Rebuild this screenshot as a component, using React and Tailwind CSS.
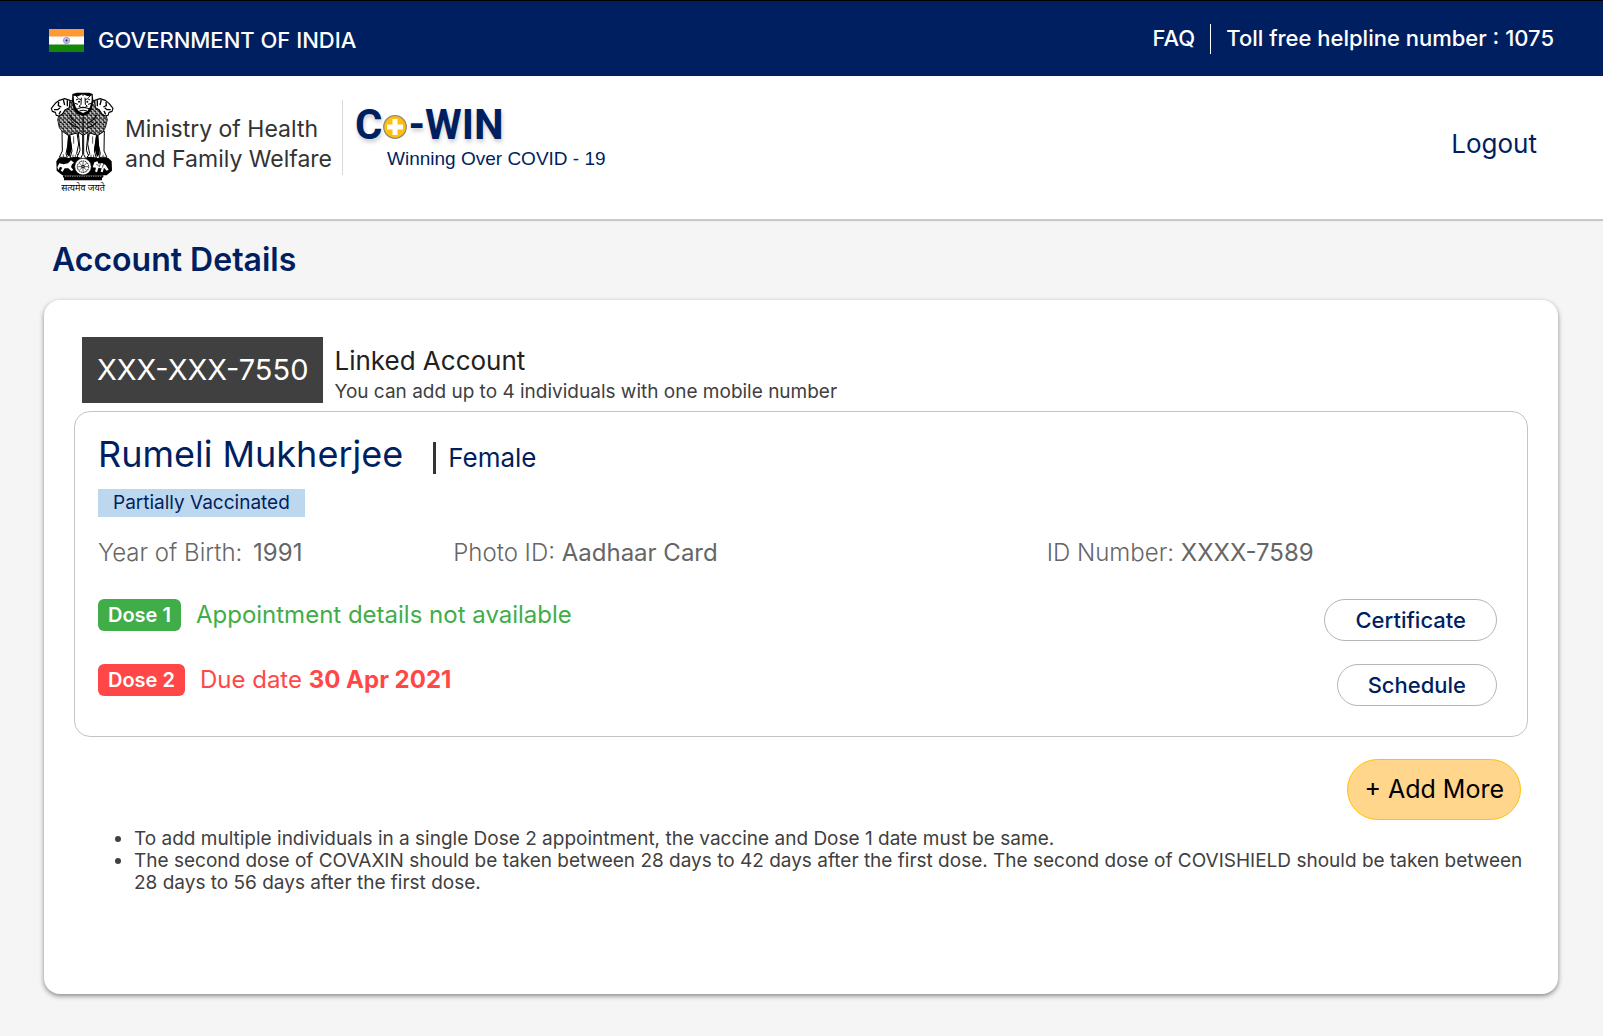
import React from 'react';

const NOTES = [
  'To add multiple individuals in a single Dose 2 appointment, the vaccine and Dose 1 date must be same.',
  'The second dose of COVAXIN should be taken between 28 days to 42 days after the first dose. The second dose of COVISHIELD should be taken between 28 days to 56 days after the first dose.'
];

function IndiaFlag() {
  return (
    <svg className="w-[35px] h-[23px] shrink-0" viewBox="0 0 35 23" role="img" aria-label="Flag of India">
      <rect width="35" height="23" fill="#fff" />
      <rect width="35" height="7.5" fill="#ff9933" />
      <rect y="15.5" width="35" height="7.5" fill="#138808" />
      <circle cx="17.5" cy="11.5" r="3.1" fill="#d5d5ec" stroke="#8080c4" strokeWidth="0.8" />
      <path d="M17.5 8.5v6M14.5 11.5h6M15.4 9.4l4.2 4.2M19.6 9.4l-4.2 4.2" stroke="#8080c4" strokeWidth="0.4" />
      <circle cx="17.5" cy="11.5" r="1" fill="#20208c" />
    </svg>
  );
}

function StateEmblem() {
  return (
    <svg className="w-16 h-[101px] shrink-0" viewBox="32 37 192 303" role="img" aria-label="State Emblem of India">
      <defs>
        <pattern id="mane" width="12" height="13" patternUnits="userSpaceOnUse">
          <rect width="12" height="13" fill="#000" />
          <path d="M2 0q5 4 2 9M8 6q4 4 1 8M8 -7q4 4 1 8" stroke="#fff" strokeWidth="3.6" fill="none" />
        </pattern>
      </defs>

      {/* bodies and manes */}
      <path
        d="M98 62 76 66 58 80 60 104 55 120 60 144 74 162 88 170 100 163 114 172 131 164 146 172 160 163 172 170 187 162 198 144 204 120 199 104 202 80 184 66 162 62Z"
        fill="url(#mane)" stroke="#000" strokeWidth="2.5"
      />

      {/* side heads */}
      <g fill="#fff" stroke="#000" strokeWidth="3.5" strokeLinejoin="round">
        <path d="M92 62 76 57 60 62 48 71 36 86 39 95 48 98 51 107 60 109 70 102 78 90 90 84Z" />
        <path d="M166 62 182 57 198 62 209 71 221 86 218 95 209 98 206 107 197 109 187 102 179 90 168 84Z" />
      </g>
      <g fill="none" stroke="#000" strokeWidth="4">
        <path d="M58 67 57 78 66 82M72 60 76 76M84 62 84 80M44 90 55 90 62 84M64 94l-5 10" />
        <path d="M200 67 201 78 192 82M186 60 182 76M174 62 174 80M214 90 203 90 196 84M194 94l5 10" />
      </g>

      {/* front head */}
      <path d="M99 43 112 39h38l10 4 2 22-5 24-10 14-16 6-17-6-11-14-5-24Z" fill="#000" />
      <path d="M103 48 116 50 130 44 146 50 157 47 157 64 152 82 144 94 131 100 118 94 109 82 104 64Z" fill="#fff" />
      <path
        d="M110 61q9-8 15 0M137 61q8-8 15 0M126 54l-1 20-6 6 8 4h9l8-4-6-6-1-20M114 87q17-9 35 0M120 94q11-5 23 0M107 46l9 8M155 46l-8 8M131 40v9M106 71l10 3M156 71l-10 3"
        fill="none" stroke="#000" strokeWidth="3"
      />
      <circle cx="119" cy="66" r="3" />
      <circle cx="144" cy="66" r="3" />

      {/* chest curls */}
      <path
        d="M90 106q10 18 28 25M88 126q12 14 30 18M172 106q-10 18-28 25M174 126q-12 14-30 18M131 112v46"
        fill="none" stroke="#000" strokeWidth="3.5"
      />

      {/* legs */}
      <g fill="#fff" stroke="#000" strokeWidth="3" strokeLinejoin="round">
        <path d="M68 154 88 168 86 194 80 222 84 233 60 233 69 214Z" />
        <path d="M91 166 113 160 118 193 112 222 120 233 92 235 98 214Z" />
        <path d="M117 158 130 166 130 224 124 236 113 233 122 212Z" />
        <path d="M146 158 133 166 133 224 139 236 150 233 141 212Z" />
        <path d="M172 166 150 160 145 193 151 222 143 233 171 235 165 214Z" />
        <path d="M195 154 175 168 177 194 183 222 179 233 203 233 194 214Z" />
      </g>
      <path d="M86 168 93 168 98 206 90 232 82 224ZM177 168 170 168 165 206 173 232 181 224Z" />
      <path d="M103 170v22M160 170v22" stroke="#000" strokeWidth="2" />
      <path d="M72 224v9M101 225v9M108 225v9M155 225v9M163 225v9M191 225v9" stroke="#000" strokeWidth="2" />

      {/* abacus with wheel, horse and bull */}
      <path d="M58 235h34l20-3 19 5 20-5 22 3h34l10 10 1 28-16 14H69l-17-14-1-28Z" />
      <circle cx="131" cy="261" r="25" fill="#fff" stroke="#000" strokeWidth="2" />
      <circle cx="131" cy="261" r="17" fill="none" stroke="#000" strokeWidth="3" strokeDasharray="5 2" />
      <path d="M131 246v30M116 261h30M120 250l22 22M142 250l-22 22" stroke="#000" strokeWidth="1.8" />
      <circle cx="131" cy="261" r="5" fill="#000" />
      <circle cx="131" cy="261" r="2" fill="#fff" />
      <path d="M54 262 60 251 73 254 86 251 95 242 104 249 98 254 95 262 102 271 96 274 87 266 76 266 70 276 64 273 69 264 62 261 57 271Z" fill="#fff" />
      <path d="M160 263 165 248 174 245 178 252 188 250 199 256 208 270 202 273 194 264 190 278 184 276 187 266 177 265 173 278 167 276 170 264Z" fill="#fff" />
      <path d="M171 254l7 4M184 251l-5 12M193 252l-4 12M163 270l5 6" stroke="#000" strokeWidth="2" />

      {/* plinth */}
      <path d="M71 287h121v5l-4 3v7H74v-7l-3-3Z" />
      <path d="M77 290h109" stroke="#fff" strokeWidth="1.5" strokeDasharray="4 3" />

      <text x="131" y="333" textAnchor="middle" fontSize="27" fontFamily="'Noto Sans', sans-serif">
        सत्यमेव जयते
      </text>
    </svg>
  );
}

function CowinLogo() {
  return (
    <div className="flex flex-col pl-3 text-[#001f60]">
      <div
        className="flex items-center font-['Roboto',sans-serif] text-[42px] leading-[42px] font-bold [text-shadow:1px_3px_4px_rgba(0,0,0,0.2)]"
        aria-label="Co-WIN"
      >
        <span>C</span>
        <svg className="w-6 h-6 mt-1 mr-0.5" viewBox="0 0 24 24" aria-hidden="true">
          <circle cx="12" cy="12" r="11.3" fill="#ffbf0b" stroke="#8d8a7a" strokeWidth="1.2" />
          <path d="M12 4v16M4 12h16" stroke="#fff" strokeWidth="5" />
        </svg>
        <span>-WIN</span>
      </div>
      <span className="pl-8 font-['Liberation_Sans',sans-serif] text-[19px] leading-[26px]">Winning Over COVID - 19</span>
    </div>
  );
}

function DoseRow({ label, color, action, children }) {
  return (
    <div className="flex items-start justify-between">
      <div className="flex items-center gap-[15px]">
        <span className={`rounded-md px-2.5 text-xl leading-8 font-semibold text-white ${color === 'green' ? 'bg-[#41ad49]' : 'bg-[#ff4747]'}`}>
          {label}
        </span>
        <span className={`text-2xl leading-[30px] ${color === 'green' ? 'text-[#41ad49]' : 'text-[#ff4747]'}`}>
          {children}
        </span>
      </div>
      <button className="h-[42px] rounded-full border border-[#b5b5b5] px-[30px] text-[22px] font-medium text-[#001f60]">
        {action}
      </button>
    </div>
  );
}

function MemberCard() {
  return (
    <section className="rounded-2xl border border-[#c4c4c4] pt-[22px] pr-[30px] pb-[30px] pl-[23px]">
      <div className="flex items-baseline text-[#001f60]">
        <h3 className="text-[36px] leading-10">Rumeli Mukherjee</h3>
        <span className="ml-[30px] h-8 w-[3px] self-end bg-[#333]" />
        <span className="ml-3 text-[26px] leading-8">Female</span>
      </div>
      <span className="mt-[15px] inline-block bg-[#bdd7ee] px-[15px] text-[19px] leading-7 text-[#001f60]">Partially Vaccinated</span>

      <div className="mt-5 grid grid-cols-[355fr_593fr_450fr] text-2xl leading-8 font-light text-[#666]">
        <p>Year of Birth: <span className="ml-1 font-normal">1991</span></p>
        <p>Photo ID: <span className="font-normal">Aadhaar Card</span></p>
        <p>ID Number: <span className="font-normal">XXXX-7589</span></p>
      </div>

      <div className="mt-[30px] flex flex-col gap-[23px]">
        <DoseRow label="Dose 1" color="green" action="Certificate">Appointment details not available</DoseRow>
        <DoseRow label="Dose 2" color="red" action="Schedule">
          Due date <strong className="font-bold">30 Apr 2021</strong>
        </DoseRow>
      </div>
    </section>
  );
}

export default function App() {
  return (
    <div className="min-h-screen bg-[#f5f5f5] pb-[42px] font-['Inter',sans-serif] text-[#212121]">
      <div className="flex h-[76px] items-center justify-between border-t border-black bg-[#001f60] px-[49px] text-[22px] font-medium text-white">
        <div className="flex items-center gap-3.5 pt-1">
          <IndiaFlag />
          <span>GOVERNMENT OF INDIA</span>
        </div>
        <div className="flex items-center">
          <a href="#faq">FAQ</a>
          <span className="mx-[15px] h-[30px] w-px bg-white" />
          <span>Toll free helpline number : 1075</span>
        </div>
      </div>

      <header className="flex h-[143px] items-start justify-between bg-white pt-4 pr-[66px] pl-[50px] shadow-[0_2px_1px_#c8c8c8]">
        <div className="flex items-start">
          <StateEmblem />
          <p className="mt-[22px] ml-[11px] text-[23px] leading-[30px] text-[#333]">
            Ministry of Health<br />and Family Welfare
          </p>
          <div className="mt-2 ml-2.5 h-[75px] border-l border-[#d8d8d8] pt-1">
            <CowinLogo />
          </div>
        </div>
        <a href="#logout" className="mt-[34px] text-[26px] leading-9 text-[#001f60]">Logout</a>
      </header>

      <main className="pr-[45px] pl-[44px]">
        <h1 className="pt-[21px] pl-2 text-[32px] leading-10 font-semibold text-[#001f60]">Account Details</h1>

        <div className="mt-5 min-h-[694px] rounded-2xl bg-white px-[30px] pt-[37px] shadow-[0_2px_5px_rgba(0,0,0,0.45)]">
          <div className="flex items-end gap-[11px] pl-2">
            <span className="bg-[#404040] px-[15px] text-[29px] leading-[66px] text-white">XXX-XXX-7550</span>
            <div>
              <h2 className="text-[26px] leading-10">Linked Account</h2>
              <p className="text-[19px] leading-[22px] text-[#404040]">You can add up to 4 individuals with one mobile number</p>
            </div>
          </div>

          <div className="mt-2">
            <MemberCard />
          </div>

          <div className="mt-[22px] flex justify-end pr-[7px]">
            <button className="h-[61px] rounded-full border border-[#ffc107] bg-[#ffd68c] px-4 text-[25px] text-black">+ Add More</button>
          </div>

          <ul className="mt-2 ml-[60px] list-disc text-[19px] leading-[22px] text-[#404040]">
            {NOTES.map((note) => <li key={note}>{note}</li>)}
          </ul>
        </div>
      </main>
    </div>
  );
}
